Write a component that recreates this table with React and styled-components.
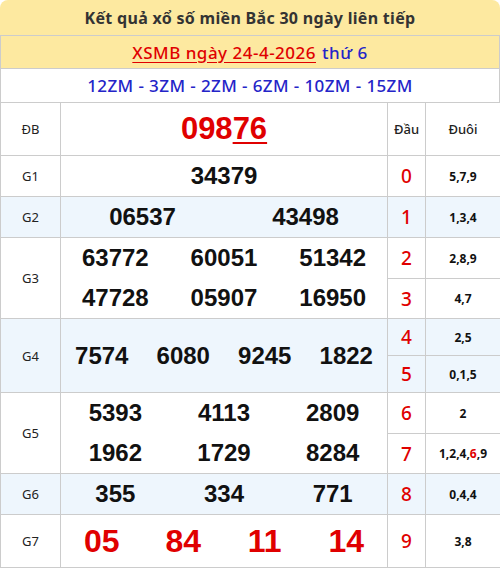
import React from "react";
import styled, { createGlobalStyle } from "styled-components";

const GlobalStyle = createGlobalStyle`
  body {
    margin: 0;
    background: #fff;
    font-family: "Noto Sans", "Liberation Sans", sans-serif;
  }
`;

const Wrap = styled.div`
  width: 500px;
`;

const Title = styled.div`
  height: 36px;
  background: #fde9a0;
  border-radius: 8px 8px 0 0;
  border-bottom: 1px solid #ccc;
  display: flex;
  align-items: center;
  justify-content: center;
  font-size: 16px;
  font-weight: 700;
  letter-spacing: 0.3px;
  color: #333;
  box-sizing: border-box;
  padding-top: 1px;
`;

const InfoRow = styled.div`
  height: 33px;
  box-sizing: border-box;
  background: ${(p) => (p.$yellow ? "#fde9a0" : "#fff")};
  border-left: 1px solid #ccc;
  border-right: 1px solid #ccc;
  border-bottom: ${(p) => (p.$last ? "none" : "1px solid #ccc")};
  display: flex;
  align-items: center;
  justify-content: center;
  gap: 6px;
  font-size: 17px;
  font-weight: 500;
  letter-spacing: ${(p) => (p.$yellow ? 0.5 : 0.4)}px;
  color: #2424c8;
`;

const DateLink = styled.span`
  color: #e00000;
  text-decoration: underline;
  text-underline-offset: 3px;
`;

const Table = styled.table`
  width: 500px;
  border-collapse: collapse;
  table-layout: fixed;
`;

const Row = styled.tr`
  height: ${(p) => p.$h}px;
  background: ${(p) => (p.$blue ? "#eef6fd" : "#fff")};
`;

const Cell = styled.td`
  border: 1px solid #ccc;
  padding: 0;
  text-align: center;
  vertical-align: middle;
`;

const Label = styled(Cell)`
  font-size: 13px;
  color: #222;
`;

const HeadCell = styled(Cell)`
  font-size: 13px;
  font-weight: 500;
  color: #222;
`;

const Dau = styled(Cell)`
  font-size: 19px;
  font-weight: 500;
  color: #e00000;
`;

const Duoi = styled(Cell)`
  font-size: 12px;
  font-weight: 700;
  color: #111;
`;

const Hit = styled.span`
  color: #e00000;
`;

const Numbers = styled.div`
  display: grid;
  grid-template-columns: repeat(${(p) => p.$cols}, 1fr);
  grid-auto-rows: 1fr;
  height: 100%;
  align-items: center;
  font-family: "Liberation Sans", Arial, sans-serif;
  font-weight: 700;
  font-size: ${(p) => p.$size || 24}px;
  color: ${(p) => (p.$red ? "#e00000" : "#111")};
`;

const Num = styled.span`
  text-align: center;
`;

const Special = styled.span`
  font-family: "Liberation Sans", Arial, sans-serif;
  font-weight: 700;
  font-size: 31px;
  color: #e00000;
`;

const Tail = styled.span`
  text-decoration: underline;
  text-decoration-thickness: 2px;
  text-underline-offset: 3px;
`;

function NumCell({ list, cols, rowSpan, size, red }) {
  return (
    <Cell rowSpan={rowSpan} style={{ height: "1px" }}>
      <Numbers $cols={cols} $size={size} $red={red}>
        {list.map((n, i) => (
          <Num key={i}>{n}</Num>
        ))}
      </Numbers>
    </Cell>
  );
}

function Tails({ text }) {
  return (
    <Duoi>
      {text.split(",").map((d, i, arr) => (
        <React.Fragment key={i}>
          {d === "6" && arr.length > 4 ? <Hit>{d}</Hit> : d}
          {i < arr.length - 1 ? "," : ""}
        </React.Fragment>
      ))}
    </Duoi>
  );
}

export default function App() {
  return (
    <Wrap>
      <GlobalStyle />
      <Title>Kết quả xổ số miền Bắc 30 ngày liên tiếp</Title>
      <InfoRow $yellow>
        <DateLink>XSMB ngày 24-4-2026</DateLink> thứ 6
      </InfoRow>
      <InfoRow $last>12ZM - 3ZM - 2ZM - 6ZM - 10ZM - 15ZM</InfoRow>
      <Table>
        <colgroup>
          <col style={{ width: 60 }} />
          <col style={{ width: 327 }} />
          <col style={{ width: 38 }} />
          <col style={{ width: 75 }} />
        </colgroup>
        <tbody>
          <Row $h={53}>
            <Label>ĐB</Label>
            <Cell>
              <Special>
                098<Tail>76</Tail>
              </Special>
            </Cell>
            <HeadCell>Đầu</HeadCell>
            <HeadCell>Đuôi</HeadCell>
          </Row>
          <Row $h={41}>
            <Label>G1</Label>
            <NumCell list={["34379"]} cols={1} />
            <Dau>0</Dau>
            <Tails text="5,7,9" />
          </Row>
          <Row $h={41} $blue>
            <Label>G2</Label>
            <NumCell list={["06537", "43498"]} cols={2} />
            <Dau>1</Dau>
            <Tails text="1,3,4" />
          </Row>
          <Row $h={41}>
            <Label rowSpan={2}>G3</Label>
            <NumCell
              list={["63772", "60051", "51342", "47728", "05907", "16950"]}
              cols={3}
              rowSpan={2}
            />
            <Dau>2</Dau>
            <Tails text="2,8,9" />
          </Row>
          <Row $h={40}>
            <Dau>3</Dau>
            <Tails text="4,7" />
          </Row>
          <Row $h={37} $blue>
            <Label rowSpan={2}>G4</Label>
            <NumCell list={["7574", "6080", "9245", "1822"]} cols={4} rowSpan={2} />
            <Dau>4</Dau>
            <Tails text="2,5" />
          </Row>
          <Row $h={37} $blue>
            <Dau>5</Dau>
            <Tails text="0,1,5" />
          </Row>
          <Row $h={41}>
            <Label rowSpan={2}>G5</Label>
            <NumCell
              list={["5393", "4113", "2809", "1962", "1729", "8284"]}
              cols={3}
              rowSpan={2}
            />
            <Dau>6</Dau>
            <Tails text="2" />
          </Row>
          <Row $h={40}>
            <Dau>7</Dau>
            <Tails text="1,2,4,6,9" />
          </Row>
          <Row $h={41} $blue>
            <Label>G6</Label>
            <NumCell list={["355", "334", "771"]} cols={3} />
            <Dau>8</Dau>
            <Tails text="0,4,4" />
          </Row>
          <Row $h={53}>
            <Label>G7</Label>
            <NumCell list={["05", "84", "11", "14"]} cols={4} size={32} red />
            <Dau>9</Dau>
            <Tails text="3,8" />
          </Row>
        </tbody>
      </Table>
    </Wrap>
  );
}
